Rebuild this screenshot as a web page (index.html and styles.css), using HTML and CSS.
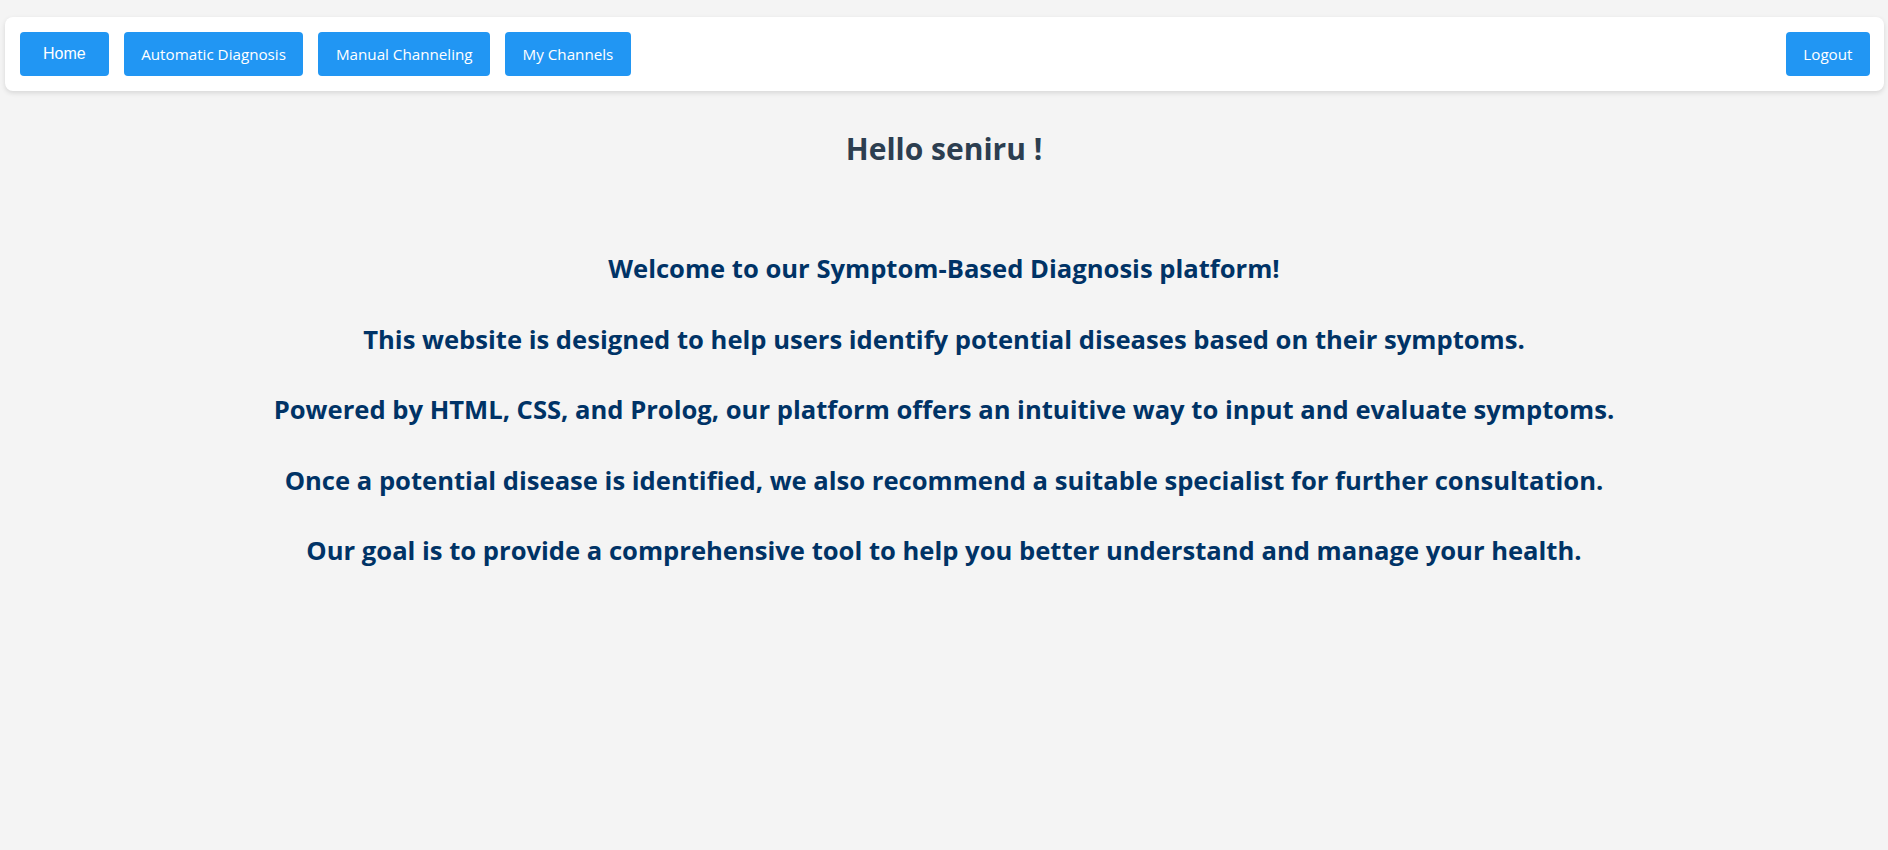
FILE: index.html
```html
<!DOCTYPE html>
<html lang="en">
<head>
<meta charset="utf-8">
<title>Home</title>
<link rel="stylesheet" href="styles.css">
</head>
<body>
  <nav class="navbar">
    <button class="nav-btn nav-btn-home" type="button">Home</button>
    <a class="nav-btn" href="#">Automatic Diagnosis</a>
    <a class="nav-btn" href="#">Manual Channeling</a>
    <a class="nav-btn" href="#">My Channels</a>
    <a class="nav-btn nav-btn-logout" href="#">Logout</a>
  </nav>
  <main class="content">
    <h1 class="greeting">Hello seniru !</h1>
    <div class="intro">
      <p class="intro-line">Welcome to our Symptom-Based Diagnosis platform!</p>
      <p class="intro-line">This website is designed to help users identify potential diseases based on their symptoms.</p>
      <p class="intro-line">Powered by HTML, CSS, and Prolog, our platform offers an intuitive way to input and evaluate symptoms.</p>
      <p class="intro-line">Once a potential disease is identified, we also recommend a suitable specialist for further consultation.</p>
      <p class="intro-line">Our goal is to provide a comprehensive tool to help you better understand and manage your health.</p>
    </div>
  </main>
</body>
</html>
```
FILE: styles.css
```css
html, body {
  margin: 0;
  padding: 0;
}

body {
  background: #f4f4f4;
  font-family: "Open Sans", "Noto Sans", sans-serif;
  min-height: 850px;
}

.navbar {
  display: flex;
  align-items: center;
  gap: 15px;
  margin: 17px 4px 0 5px;
  padding: 15px 14px 15px 15px;
  background: #ffffff;
  border-radius: 8px;
  box-shadow: 0 2px 5px rgba(0, 0, 0, 0.12);
}

.nav-btn {
  display: flex;
  align-items: center;
  justify-content: center;
  box-sizing: border-box;
  height: 44px;
  padding: 0 17.5px;
  background: #2196f3;
  color: #ffffff;
  border: none;
  border-radius: 4px;
  font-family: "Open Sans", "Noto Sans", sans-serif;
  font-size: 15.2px;
  text-decoration: none;
  white-space: nowrap;
  cursor: pointer;
}

.nav-btn-home {
  padding: 0 23px;
  font-family: "Liberation Sans", Arial, sans-serif;
  font-size: 16px;
}

.nav-btn-logout {
  margin-left: auto;
}

.content {
  display: flex;
  flex-direction: column;
  align-items: center;
  padding-top: 37px;
  text-align: center;
}

.greeting {
  margin: 0;
  font-size: 30px;
  font-weight: 700;
  line-height: normal;
  color: #2c3e50;
}

.intro {
  display: flex;
  flex-direction: column;
  align-items: center;
  gap: 34.5px;
  margin-top: 82px;
}

.intro-line {
  margin: 0;
  font-size: 25.6px;
  font-weight: 700;
  line-height: 36px;
  color: #003366;
}
```
